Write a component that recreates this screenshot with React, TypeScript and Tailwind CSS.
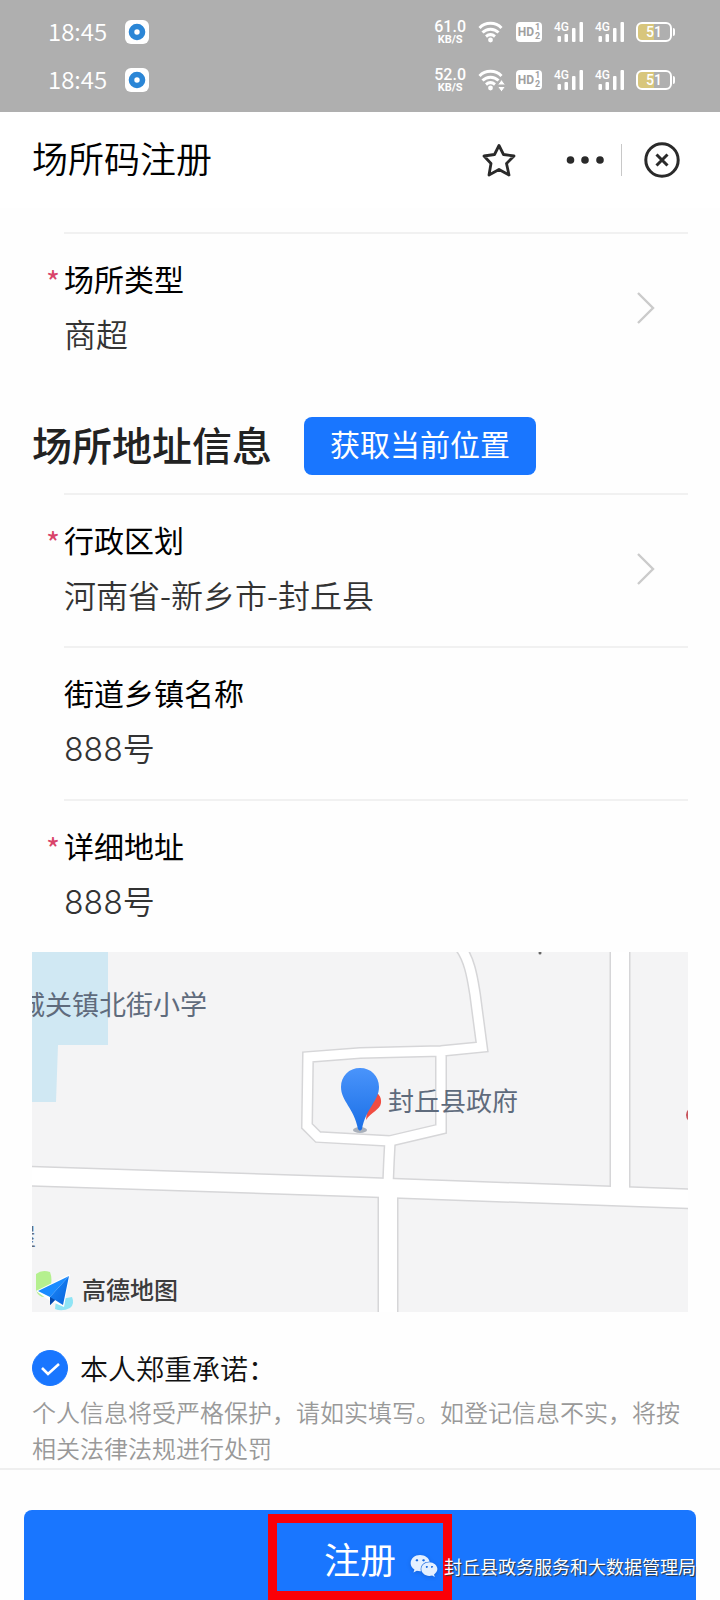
import { useState } from "react";
import { FaWeixin } from "react-icons/fa";

const statusRows = [
  { id: "front", time: "18:45", speed: "61.0", busy: false },
  { id: "back", time: "18:45", speed: "52.0", busy: true }
];

const wideRoads = ["M-5 224 L328 235 L661 247", "M588 -5 V238", "M356 240 V365"];
const narrowRoads = [
  "M427 -6 C438 6 441 30 443 42 L450 95 L409 99 L328 101 L276 105 L275 174 L286 185 L358 189 L409 177 V99",
  "M358 189 L357 208 L356 232"
];

function WifiIcon({ busy }: { busy: boolean }) {
  return (
    <svg className="h-6 w-7" viewBox="0 0 28 24" fill="none" stroke="#fff" strokeWidth="3">
      <path d="M1.500 8 C7.500 1.800 17.500 1.800 23.500 8" />
      <path d="M4.500 12.500 C9 8 16 8 20.500 12.500" />
      <path d="M8 16.500 C11 14 14 14 17 16.500" />
      <circle cx="12.500" cy="20" r="2.400" fill="#fff" stroke="none" />
      {busy && (
        <path d="M19.500 17 L23.500 11.500 L27.500 17 Z M19.500 18.500 L23.500 24 L27.500 18.500 Z" fill="#fff" stroke="#afafaf" strokeWidth="1" />
      )}
    </svg>
  );
}

function HdBadge() {
  return (
    <span className="flex h-5 w-[26px] items-center justify-center gap-px rounded bg-white text-[#a0a0a0]">
      <span className="font-['Roboto',sans-serif] text-[12px] font-bold leading-5">HD</span>
      <span className="flex flex-col font-['Roboto',sans-serif] text-[9px] font-bold leading-[9px]">
        <span>1</span>
        <span>2</span>
      </span>
    </span>
  );
}

function SignalIcon() {
  return (
    <span className="relative block h-5 w-[29px]">
      <span className="absolute left-0 top-0 font-['Roboto',sans-serif] text-[12px] font-medium leading-[10px]">4G</span>
      <svg className="h-5 w-[29px]" viewBox="0 0 29 20" fill="#fff">
        <rect x="3.500" y="14" width="3.500" height="6" rx="1" />
        <rect x="10.500" y="12" width="3.500" height="8" rx="1" />
        <rect x="18" y="6" width="3.500" height="14" rx="1" />
        <rect x="25.500" y="0" width="3.500" height="20" rx="1" />
      </svg>
    </span>
  );
}

function BatteryIcon() {
  return (
    <span className="flex items-center gap-px">
      <span className="flex h-5 w-9 items-center justify-center rounded-md border-2 border-white bg-linear-to-r from-[#d8c67c] from-50% to-transparent to-50% font-['Roboto',sans-serif] text-[14px] font-medium">
        51
      </span>
      <span className="h-2 w-0.5 rounded-r bg-white" />
    </span>
  );
}

function StatusBar() {
  return (
    <div className="bg-[#afafaf] py-2 text-white">
      {statusRows.map((row) => (
        <div key={row.id} className="flex h-12 items-center justify-between pl-12 pr-[45px]">
          <div className="flex items-center gap-[18px]">
            <span className="pb-0.5 text-[24px] font-[350] leading-8">{row.time}</span>
            <svg className="size-6" viewBox="0 0 24 24">
              <rect width="24" height="24" rx="6" fill="#fff" />
              <circle cx="12" cy="12" r="5.500" fill="none" stroke="#2b86d6" strokeWidth="5.600" />
            </svg>
          </div>
          <div className="flex items-center gap-3">
            <span className="flex flex-col items-center font-['Roboto',sans-serif]">
              <span className="text-[16px] font-medium leading-4">{row.speed}</span>
              <span className="text-[11px] font-bold leading-[10px]">KB/S</span>
            </span>
            <span className="flex items-center gap-[10px]">
              <WifiIcon busy={row.busy} />
              <HdBadge />
            </span>
            <SignalIcon />
            <SignalIcon />
            <BatteryIcon />
          </div>
        </div>
      ))}
    </div>
  );
}

function TitleBar() {
  return (
    <header className="flex h-24 items-center justify-between bg-white pl-8 pr-10 text-[#2a2a2a]">
      <h1 className="pb-1.5 text-[36px] font-[350] leading-12 text-black">场所码注册</h1>
      <div className="flex items-center">
        <button type="button" aria-label="收藏" className="mr-12">
          <svg className="size-9" viewBox="0 0 36 36" fill="none" stroke="currentColor" strokeWidth="2.800" strokeLinejoin="round">
            <path d="M18 3.500 L22.500 12.500 L33 14 L25.500 21.500 L28 33 L18 27.500 L8 33 L10 21.500 L3 14 L13.500 12.500 Z" />
          </svg>
        </button>
        <button type="button" aria-label="更多">
          <svg className="h-9 w-10" viewBox="0 0 40 36" fill="currentColor">
            <circle cx="5.500" cy="18" r="3.800" />
            <circle cx="20" cy="18" r="3.800" />
            <circle cx="35" cy="18" r="3.800" />
          </svg>
        </button>
        <span className="mx-4 h-8 w-px bg-[#c8c8c8]" />
        <button type="button" aria-label="关闭" className="ml-1.5">
          <svg className="size-9" viewBox="0 0 36 36" fill="none" stroke="currentColor" strokeWidth="3">
            <circle cx="18" cy="18" r="16.200" />
            <path d="M12.500 12.500 L23.500 23.500 M23.500 12.500 L12.500 23.500" />
          </svg>
        </button>
      </div>
    </header>
  );
}

// gutter left of every field, with the red star when the field is mandatory
function Gutter({ required }: { required?: boolean }) {
  return (
    <span className="w-8 shrink-0 pl-[14px] pt-[22px] text-[30px] leading-[55px] text-[#d9446a]">
      {required && "*"}
    </span>
  );
}

function PickerField({ label, value }: { label: string; value: string }) {
  return (
    <button type="button" className="flex w-full text-left">
      <Gutter required />
      <span className="flex flex-1 items-center justify-between border-t-2 border-[#f1f1f1] pb-6 pr-8 pt-[17px]">
        <span className="flex flex-col leading-[55px]">
          <span className="text-[30px] text-black">{label}</span>
          <span className="text-[32px] font-[350] text-[#333]">{value}</span>
        </span>
        <svg className="mt-1 h-9 w-5" viewBox="0 0 20 36" fill="none" stroke="#cbcbcb" strokeWidth="2.400">
          <path d="M2 3 L17 18 L2 33" />
        </svg>
      </span>
    </button>
  );
}

function TextField({
  id,
  label,
  value,
  required,
  onChange
}: {
  id: string;
  label: string;
  value: string;
  required?: boolean;
  onChange: (value: string) => void;
}) {
  return (
    <div className="flex">
      <Gutter required={required} />
      <div className="flex min-w-0 flex-1 flex-col border-t-2 border-[#f1f1f1] pb-6 pt-[17px]">
        <label htmlFor={id} className="text-[30px] leading-[55px] text-black">
          {label}
        </label>
        <input
          id={id}
          className="h-[55px] w-full bg-transparent pb-0.5 font-['Inter','Noto_Sans_CJK_SC',sans-serif] text-[32px] font-[350] text-[#333] outline-none"
          value={value}
          onChange={(event) => onChange(event.target.value)}
        />
      </div>
    </div>
  );
}

function LocationMap() {
  return (
    <div className="relative h-[360px] overflow-hidden bg-[#f4f4f5] text-[#5f6b7c]">
      <svg className="h-full w-full" viewBox="0 0 656 360" preserveAspectRatio="xMidYMid slice" fill="none">
        <defs>
          <linearGradient id="pin" x1="0" y1="0" x2="0" y2="1">
            <stop offset="0" stopColor="#4a94fb" />
            <stop offset="1" stopColor="#1a6fe6" />
          </linearGradient>
          <linearGradient id="plane" x1="0" y1="0" x2="1" y2="1">
            <stop offset="0" stopColor="#1a8bff" />
            <stop offset="1" stopColor="#0a62d8" />
          </linearGradient>
        </defs>
        <path d="M0 0 H76 V93 H26 L24 150 H0 Z" fill="#d0e8f3" />
        <g stroke="#d6d6d8" strokeLinejoin="miter">
          {wideRoads.map((d) => (
            <path key={d} d={d} strokeWidth="21" />
          ))}
          {narrowRoads.map((d) => (
            <path key={d} d={d} strokeWidth="12" />
          ))}
        </g>
        <g stroke="#fff" strokeLinejoin="miter">
          {wideRoads.map((d) => (
            <path key={d} d={d} strokeWidth="18" />
          ))}
          {narrowRoads.map((d) => (
            <path key={d} d={d} strokeWidth="9" />
          ))}
        </g>
        <circle cx="508" cy="1" r="1.500" fill="#666" />
        <circle cx="662" cy="163" r="8" fill="#c8545c" />
        <path d="M337 139 C345 138 350 144 349 151 C348 158 339 160 334 168 Z" fill="#f04c41" />
        <ellipse cx="328" cy="178" rx="7" ry="3" fill="#a9b0ba" />
        <path d="M328 116 C339 116 347 124 347 135 C347 149 334 156 330 177 Q328 180 326 177 C322 156 309 149 309 135 C309 124 317 116 328 116 Z" fill="url(#pin)" />
        <path d="M4 322 Q10 317 18 320 Q22 330 15 345 Q6 346 4 338 Z" fill="#b5f08f" />
        <path d="M24 348 L40 345 Q43 352 38 356 Q30 360 23 357 Z" fill="#8fe4f5" />
        <path d="M4 339 L38 322 L32 355 L18 349 Z" fill="#fff" />
        <path d="M37 324 L6 339 L18 345 Z" fill="#1a8bff" />
        <path d="M37 324 L18 345 L18 353 L23 348 L31 353 Z" fill="url(#plane)" />
        <path d="M18 345 L18 353 L23 348 Z" fill="#0748a8" />
      </svg>
      <span className="absolute right-[481px] top-8 whitespace-nowrap text-[27px] leading-10">城关镇北街小学</span>
      <span className="absolute left-[356px] top-32 whitespace-nowrap text-[26px] leading-10">封丘县政府</span>
      <span className="absolute right-[652px] top-[267px] text-[24px] leading-8">屋</span>
      <span className="absolute bottom-[7px] left-[50px] text-[24px] font-medium leading-8 text-[#3c3c3c]">高德地图</span>
    </div>
  );
}

export default function App() {
  const [street, setStreet] = useState("888号");
  const [address, setAddress] = useState("888号");
  const [agreed, setAgreed] = useState(true);

  return (
    <div className="flex min-h-screen flex-col bg-[#fefefe] font-['Noto_Sans_CJK_SC',sans-serif]">
      <StatusBar />
      <TitleBar />

      <main className="px-8 pt-6">
        <PickerField label="场所类型" value="商超" />

        <div className="flex items-start gap-8 pb-[18px] pt-8">
          <h2 className="text-[40px] font-medium leading-[54px] text-[#222]">场所地址信息</h2>
          <button type="button" className="h-[58px] rounded-lg bg-[#1976ff] px-[26px] pb-1.5 text-[30px] leading-[52px] text-white">
            获取当前位置
          </button>
        </div>

        <PickerField label="行政区划" value="河南省-新乡市-封丘县" />
        <TextField id="street" label="街道乡镇名称" value={street} onChange={setStreet} />
        <TextField id="address" label="详细地址" value={address} required onChange={setAddress} />

        <LocationMap />

        <div className="mt-[38px] flex items-center gap-3">
          <span className="relative size-9">
            <input
              id="promise"
              type="checkbox"
              checked={agreed}
              onChange={(event) => setAgreed(event.target.checked)}
              className="block size-9 appearance-none rounded-full border border-[#ccc] checked:border-[#1976ff] checked:bg-[#1976ff]"
            />
            {agreed && (
              <svg className="pointer-events-none absolute inset-0 size-9" viewBox="0 0 36 36" fill="none" stroke="#fff" strokeWidth="2.600">
                <path d="M10 18 L16 24 L27 14" />
              </svg>
            )}
          </span>
          <label htmlFor="promise" className="text-[28px] font-[350] leading-9 text-[#111]">
            本人郑重承诺：
          </label>
        </div>
        <p className="pb-0.5 pt-2 text-[24px] font-[350] leading-9 text-[#999]">
          个人信息将受严格保护，请如实填写。如登记信息不实，将按相关法律法规进行处罚
        </p>
      </main>

      <footer className="relative border-t-2 border-[#efefef] px-6 pt-10">
        <button type="button" className="block h-[90px] w-full rounded-t-lg bg-[#1976ff] pt-1.5 text-[36px] text-white">
          注册
        </button>
        <div className="absolute bottom-0 left-1/2 h-[86px] w-[184px] -translate-x-1/2 border-9 border-[#fb0007]" />
        <div className="absolute bottom-5 right-6 flex items-center gap-1.5 text-white">
          <FaWeixin className="size-7 text-[#e4f0ff] drop-shadow-sm" />
          <span className="text-[18px] leading-6 [text-shadow:1px_1px_1px_#333]">封丘县政务服务和大数据管理局</span>
        </div>
      </footer>
    </div>
  );
}
